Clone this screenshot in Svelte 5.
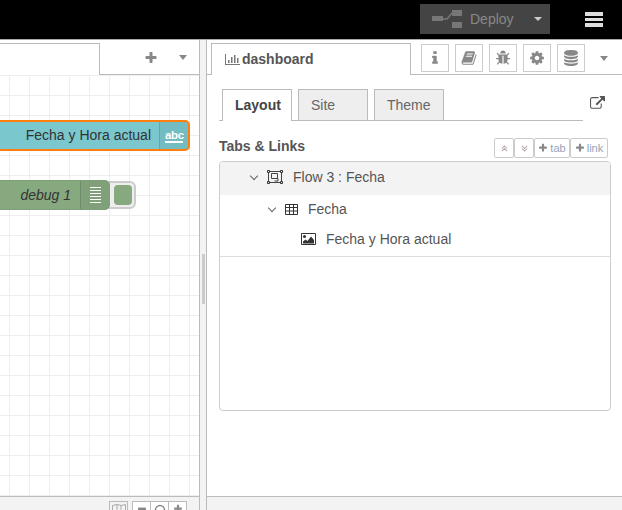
<script>
  const toolIcons = [
    { id: 'info', vb: '0 0 1792 1792', d: 'M1216 1344v128q0 26-19 45t-45 19h-512q-26 0-45-19t-19-45v-128q0-26 19-45t45-19h64v-384h-64q-26 0-45-19t-19-45v-128q0-26 19-45t45-19h384q26 0 45 19t19 45v576h64q26 0 45 19t19 45zm-128-1152v192q0 26-19 45t-45 19h-256q-26 0-45-19t-19-45v-192q0-26 19-45t45-19h256q26 0 45 19t19 45z' },
    { id: 'book', vb: '0 0 1792 1792', d: 'M1703 478q40 57 18 129l-275 906q-19 64-76.500 107.500t-122.500 43.500h-923q-77 0-148.500-53.500t-99.500-131.500q-24-67-2-127 0-4 3-27t4-37q1-8-3-21.500t-3-19.500q2-11 8-21t16.500-23.500 16.500-23.500q23-38 45-91.500t30-91.500q3-10 .5-30t-.5-28q3-11 17-28t17-23q21-36 42-92t25-90q1-9-2.500-32t.5-28q4-13 22-30.500t22-22.500q19-26 42.500-84.500t27.500-96.500q1-8-3-25.500t-2-26.500q2-8 9-18t18-23 17-21q8-12 16.500-30.500t15-35 16-36 19.500-32 26.500-23.500 36-11.500 47.500 5.500l-1 3q38-9 51-9h761q74 0 114 56t18 130l-274 906q-36 119-71.500 153.500t-128.500 34.500h-869q-27 0-38 15-11 16-1 43 24 70 144 70h923q29 0 56-15.500t35-41.500l300-987q7-22 5-57 38 15 59 43zm-1064 2q-4 13 2 22.500t20 9.500h608q13 0 25.500-9.500t16.500-22.500l21-64q4-13-2-22.500t-20-9.500h-608q-13 0-25.500 9.500t-16.500 22.500zm-83 256q-4 13 2 22.500t20 9.500h608q13 0 25.500-9.500t16.500-22.500l21-64q4-13-2-22.500t-20-9.500h-608q-13 0-25.500 9.500t-16.500 22.500z' },
    { id: 'bug', vb: '0 0 1792 1792', d: 'M1696 960q0 26-19 45t-45 19h-224q0 171-67 290l208 209q19 19 19 45t-19 45q-18 19-45 19t-45-19l-198-197q-5 5-15 13t-42 28.500-65 36.500-82 29-97 13v-896h-128v896q-51 0-101.500-13.500t-87-33-66-39-43.500-32.500l-15-14-183 207q-20 21-48 21-24 0-43-16-19-18-20.500-44.500t15.500-46.500l202-227q-58-114-58-274h-224q-26 0-45-19t-19-45 19-45 45-19h224v-294l-173-173q-19-19-19-45t19-45 45-19 45 19l173 173h844l173-173q19-19 45-19t45 19 19 45-19 45l-173 173v294h224q26 0 45 19t19 45zm-480-576h-640q0-133 93.500-226.500t226.500-93.500 226.500 93.500 93.500 226.500z' },
    { id: 'cog', vb: '0 0 1792 1792', d: 'M1152 896q0-106-75-181t-181-75-181 75-75 181 75 181 181 75 181-75 75-181zm512-109v222q0 12-8 23t-20 13l-185 28q-19 54-39 91 35 50 107 138 10 12 10 25t-9 23q-27 37-99 108t-94 71q-12 0-26-9l-138-108q-44 23-91 38-16 136-29 186-7 28-36 28h-222q-14 0-24.500-8.500t-11.500-21.500l-28-184q-49-16-90-37l-141 107q-10 9-25 9-14 0-25-11-126-114-165-168-7-10-7-23 0-12 8-23 15-21 51-66.500t54-70.500q-27-50-41-99l-183-27q-13-2-21-12.500t-8-23.500v-222q0-12 8-23t19-13l186-28q14-46 39-92-40-57-107-138-10-12-10-24 0-10 9-23 26-36 98.500-107.500t94.500-71.500q13 0 26 10l138 107q44-23 91-38 16-136 29-186 7-28 36-28h222q14 0 24.500 8.500t11.500 21.500l28 184q49 16 90 37l142-107q9-9 24-9 13 0 25 10 129 119 165 170 7 8 7 22 0 12-8 23-15 21-51 66.500t-54 70.500q26 50 41 98l183 28q13 2 21 12.500t8 23.500z' },
    { id: 'db', vb: '0 0 1792 1792', d: 'M896 768q237 0 443-43t325-127v170q0 69-103 128t-280 93.500-385 34.500-385-34.500-280-93.500-103-128v-170q119 84 325 127t443 43zm0 768q237 0 443-43t325-127v170q0 69-103 128t-280 93.500-385 34.500-385-34.500-280-93.500-103-128v-170q119 84 325 127t443 43zm0-384q237 0 443-43t325-127v170q0 69-103 128t-280 93.500-385 34.500-385-34.500-280-93.500-103-128v-170q119 84 325 127t443 43zm0-1152q208 0 385 34.500t280 93.500 103 128v128q0 69-103 128t-280 93.500-385 34.500-385-34.500-280-93.500-103-128v-128q0-69 103-128t280-93.500 385-34.500z' }
  ];
  const plus = 'M1600 736v192q0 40-28 68t-68 28h-416v416q0 40-28 68t-68 28h-192q-40 0-68-28t-28-68v-416h-416q-40 0-68-28t-28-68v-192q0-40 28-68t68-28h416v-416q0-40 28-68t68-28h192q40 0 68 28t28 68v416h416q40 0 68 28t28 68z';
  const ext = 'M1408 928v320q0 119-84.500 203.500t-203.500 84.500h-832q-119 0-203.500-84.500t-84.500-203.500v-832q0-119 84.500-203.500t203.500-84.500h704q14 0 23 9t9 23v64q0 14-9 23t-23 9h-704q-66 0-113 47t-47 113v832q0 66 47 113t113 47h832q66 0 113-47t47-113v-320q0-14 9-23t23-9h64q14 0 23 9t9 23zm384-864v512q0 26-19 45t-45 19-45-19l-176-176-652 652q-10 10-23 10t-23-10l-114-114q-10-10-10-23t10-23l652-652-176-176q-19-19-19-45t19-45 45-19h512q26 0 45 19t19 45z';
</script>

<div class="app">
  <header class="top">
    <div class="deploy">
      <svg class="deploy-icon" width="30" height="18" viewBox="0 0 30 18" aria-hidden="true">
        <path d="M0 6h11v5H0zM20 0h10v6H20zM20 12h10v6H20z" fill="#777" />
        <path d="M11 9l4 0 5-6" fill="none" stroke="#777" stroke-width="1.500" />
      </svg>
      <span class="deploy-label">Deploy</span>
      <span class="deploy-caret"></span>
    </div>
    <div class="bars"><i></i><i></i><i></i></div>
  </header>

  <main class="main">
    <section class="workspace">
      <div class="ws-tabs">
        <div class="ws-tab"></div>
        <div class="ws-tools">
          <svg class="ws-plus" width="14" height="14" viewBox="0 0 1792 1792" aria-hidden="true"><path d={plus} fill="#888" /></svg>
          <span class="caret ws-caret"></span>
        </div>
      </div>
      <div class="canvas">
        <div class="node node-time">
          <span class="node-label">Fecha y Hora actual</span>
          <span class="node-icon abc"><span class="abc-text">abc</span></span>
        </div>
        <div class="node-btn"><i></i></div>
        <div class="node node-debug">
          <span class="node-label em">debug 1</span>
          <span class="node-icon lines"><i></i><i></i><i></i><i></i><i></i><i></i></span>
        </div>
      </div>
      <div class="ws-foot">
        <span class="fb fb-map">
          <svg width="14" height="11" viewBox="0 0 14 11" aria-hidden="true"><path d="M.5 1.500L5 .5l4 1 4.500-1v9L9 10.500l-4-1-4.500 1zM5 .5v9M9 1.500v9" fill="none" stroke="#aaa" /></svg>
        </span>
        <div class="fgroup">
          <span class="fb"><svg width="10" height="10" viewBox="0 0 1792 1792" aria-hidden="true"><path d="M192 640h1408v512H192z" fill="#888" /></svg></span>
          <span class="fb"><svg width="12" height="10" viewBox="0 0 12 10" aria-hidden="true"><circle cx="6" cy="6" r="4.500" fill="none" stroke="#888" stroke-width="1.500" /></svg></span>
          <span class="fb"><svg width="10" height="10" viewBox="0 0 1792 1792" aria-hidden="true"><path d={plus} fill="#888" /></svg></span>
        </div>
      </div>
    </section>

    <div class="sep"><div class="handle"></div></div>

    <section class="sidebar">
      <div class="sb-tabs">
        <div class="sb-tab">
          <svg width="15" height="11" viewBox="0 0 15 11" aria-hidden="true"><path d="M0 0h1v10h14v1H0zM3 6h1.500v3H3zM6 3h1.500v6H6zM9 1h1.500v8H9zM12 4h1.500v5H12z" fill="#777" /></svg>
          <span>dashboard</span>
        </div>
        <div class="sb-tools">
          {#each toolIcons as t}
            <span class="tool">
              <svg width="16" height="16" viewBox={t.vb} aria-hidden="true"><path d={t.d} fill="#888" /></svg>
            </span>
          {/each}
        </div>
        <span class="caret sb-caret"></span>
      </div>

      <div class="panel">
        <div class="inner-tabs">
          <div class="itab active">Layout</div>
          <div class="itab">Site</div>
          <div class="itab">Theme</div>
          <svg class="ext" width="15" height="15" viewBox="0 0 1792 1792" aria-hidden="true"><path d={ext} fill="#555" /></svg>
        </div>

        <div class="heading">
          <span class="title">Tabs &amp; Links</span>
          <div class="mini-group">
            <span class="mini arrow">
              <svg width="7" height="7" viewBox="0 0 8 8" aria-hidden="true"><path d="M1 4l3-3 3 3M1 7l3-3 3 3" fill="none" stroke="#b9a6a6" stroke-width="1.200" /></svg>
            </span>
            <span class="mini arrow">
              <svg width="7" height="7" viewBox="0 0 8 8" aria-hidden="true"><path d="M1 1l3 3 3-3M1 4l3 3 3-3" fill="none" stroke="#b9a6a6" stroke-width="1.200" /></svg>
            </span>
            <span class="mini tab">
              <svg width="10" height="10" viewBox="0 0 1792 1792" aria-hidden="true"><path d={plus} fill="#888" /></svg>tab
            </span>
            <span class="mini link">
              <svg width="10" height="10" viewBox="0 0 1792 1792" aria-hidden="true"><path d={plus} fill="#888" /></svg>link
            </span>
          </div>
        </div>

        <div class="tree">
          <div class="row row-flow">
            <span class="chev"></span>
            <svg width="16" height="14" viewBox="0 0 16 14" aria-hidden="true">
              <path d="M1.500 1.500h13v11h-13z" fill="none" stroke="#444" />
              <path d="M4.500 3.500h6v5h-6zM7.500 8.500h3.500v2.500h-3.500" fill="none" stroke="#444" />
              <path d="M.5.500h2v2h-2zM13.500.500h2v2h-2zM.5 11.500h2v2h-2zM13.500 11.500h2v2h-2z" fill="#f3f3f3" stroke="#333" />
            </svg>
            <span class="row-text flow-text">Flow 3 : Fecha</span>
          </div>
          <div class="row row-group">
            <span class="chev"></span>
            <svg width="13" height="11" viewBox="0 0 13 11" aria-hidden="true">
              <path d="M.5.500h12v10H.500zM.500 3.500h12M.500 7h12M4.500 .5v10M8.500 .5v10" fill="none" stroke="#333" />
            </svg>
            <span class="row-text group-text">Fecha</span>
          </div>
          <div class="row row-widget">
            <svg width="15" height="12" viewBox="0 0 15 12" aria-hidden="true">
              <path d="M.5.500h14v11H.500z" fill="none" stroke="#333" />
              <circle cx="3.500" cy="3.500" r="1.500" fill="#333" />
              <path d="M2 10.500V8.500l2.500-2 2 1.500L10 3.500l3 3.500v3.500z" fill="#333" />
            </svg>
            <span class="row-text widget-text">Fecha y Hora actual</span>
          </div>
        </div>
      </div>
      <div class="sb-foot"></div>
    </section>
  </main>
</div>

<style>
  :global(body) {
    margin: 0;
    background: #fff;
  }
  .app {
    width: 622px;
    height: 510px;
    display: flex;
    flex-direction: column;
    overflow: hidden;
    font-family: "Liberation Sans", Arial, sans-serif;
    color: #555;
  }
  .top {
    height: 39px;
    flex: none;
    background: #000;
    border-bottom: 1px solid #aaa;
    display: flex;
    align-items: flex-start;
    justify-content: flex-end;
    box-sizing: content-box;
  }
  .deploy {
    width: 130px;
    height: 30px;
    margin-top: 4px;
    background: #444;
    display: flex;
    align-items: center;
    color: #888;
    font-size: 14px;
  }
  .deploy-icon {
    margin-left: 12px;
  }
  .deploy-label {
    margin-left: 9px;
    margin-right: -1px;
    position: relative;
    left: -1px;
  }
  .deploy-caret {
    margin-left: 20px;
    border-left: 4.500px solid transparent;
    border-right: 4.500px solid transparent;
    border-top: 4.500px solid #ccc;
  }
  .bars {
    width: 18px;
    margin: 12px 19px 0 35px;
    display: flex;
    flex-direction: column;
    gap: 2px;
  }
  .bars i {
    display: block;
    height: 3.500px;
    background: #ddd;
  }
  .main {
    flex: 1;
    min-height: 0;
    display: flex;
  }
  .workspace {
    width: 199px;
    flex: none;
    display: flex;
    flex-direction: column;
  }
  .ws-tabs {
    height: 35px;
    flex: none;
    display: flex;
    box-sizing: border-box;
    padding-top: 3px;
    border-bottom: 1px solid #bbb;
    background: #fff;
  }
  .ws-tab {
    width: 100px;
    height: 32px;
    box-sizing: border-box;
    border: 1px solid #bbb;
    border-left: 0;
    border-bottom: 0;
    background: #fff;
    margin-bottom: -1px;
    position: relative;
    z-index: 1;
    flex: none;
  }
  .ws-tools {
    flex: 1;
    display: flex;
    align-items: center;
    padding-bottom: 2px;
  }
  .ws-plus {
    margin-left: 44px;
  }
  .caret {
    display: block;
    width: 0;
    height: 0;
    border-left: 4.500px solid transparent;
    border-right: 4.500px solid transparent;
    border-top: 5px solid #888;
  }
  .ws-caret {
    margin-left: 21px;
  }
  .canvas {
    flex: 1;
    min-height: 0;
    position: relative;
    overflow: hidden;
    background-color: #fff;
    background-image: linear-gradient(to right, #eee 1px, transparent 1px),
      linear-gradient(to bottom, #eee 1px, transparent 1px);
    background-size: 20px 20px;
    background-position: 9px 0;
  }
  .node {
    position: absolute;
    display: flex;
    height: 30px;
    box-sizing: border-box;
    border-radius: 5px;
    color: #333;
    font-size: 14px;
  }
  .node-time {
    left: -12px;
    top: 45px;
    width: 202px;
    background: #7ac7cd;
    border: 2px solid #ff7f0e;
    height: 31px;
  }
  .node-debug {
    left: -12px;
    top: 105px;
    width: 122px;
    background: #87a980;
    border: 1px solid #7f9f78;
  }
  .node-label {
    flex: 1;
    text-align: right;
    padding-right: 8px;
    line-height: 27px;
  }
  .em {
    font-style: italic;
    line-height: 28px;
    padding-right: 9px;
  }
  .node-icon {
    width: 29px;
    flex: none;
    box-sizing: border-box;
    background: rgba(0, 0, 0, 0.05);
    border-left: 1px solid rgba(0, 0, 0, 0.12);
  }
  .abc {
    display: flex;
    justify-content: center;
    align-items: flex-start;
    padding-top: 8px;
    border-top-right-radius: 3px;
    border-bottom-right-radius: 3px;
  }
  .abc-text {
    width: 18px;
    box-sizing: border-box;
    color: #fff;
    font-size: 11.500px;
    font-weight: bold;
    letter-spacing: -0.300px;
    text-align: center;
    line-height: 10px;
    padding-bottom: 1px;
    border-bottom: 2px solid #fff;
  }
  .lines {
    display: flex;
    flex-direction: column;
    align-items: center;
    justify-content: center;
    gap: 2px;
    border-top-right-radius: 4px;
    border-bottom-right-radius: 4px;
  }
  .lines i {
    display: block;
    width: 11px;
    height: 1px;
    background: #fff;
  }
  .node-btn {
    position: absolute;
    left: 100px;
    top: 106px;
    width: 36px;
    height: 28px;
    box-sizing: border-box;
    background: #eee;
    border: 2px solid #ccc;
    border-radius: 6px;
    display: flex;
    align-items: center;
    justify-content: flex-end;
    padding-right: 2px;
  }
  .node-btn i {
    display: block;
    width: 18px;
    height: 20px;
    background: #87a980;
    border-radius: 4px;
  }
  .ws-foot {
    height: 14px;
    flex: none;
    box-sizing: border-box;
    background: #f3f3f3;
    border-top: 1px solid #bbb;
    display: flex;
    align-items: flex-start;
    padding: 4px 0 0 109px;
    gap: 5px;
    overflow: hidden;
  }
  .fgroup {
    display: flex;
  }
  .fb {
    width: 19px;
    height: 20px;
    flex: none;
    box-sizing: border-box;
    border: 1px solid #bbb;
    background: #fff;
    display: flex;
    justify-content: center;
    padding-top: 2px;
    margin-left: -1px;
  }
  .fb-map {
    margin-left: 0;
    background: #f3f3f3;
  }
  .sep {
    width: 8px;
    flex: none;
    box-sizing: border-box;
    background: #f3f3f3;
    border-left: 1px solid #bbb;
    border-right: 1px solid #bbb;
    display: flex;
    justify-content: center;
    align-items: flex-start;
    padding-top: 214px;
  }
  .handle {
    width: 3px;
    height: 50px;
    background: #ccc;
  }
  .sidebar {
    flex: 1;
    min-width: 0;
    display: flex;
    flex-direction: column;
  }
  .sb-tabs {
    height: 35px;
    flex: none;
    box-sizing: border-box;
    border-bottom: 1px solid #bbb;
    display: flex;
    padding: 3px 0 0 4px;
    position: relative;
  }
  .sb-tab {
    width: 200px;
    height: 32px;
    box-sizing: border-box;
    border: 1px solid #bbb;
    border-bottom: 0;
    background: #fff;
    display: flex;
    align-items: center;
    gap: 2px;
    padding: 0 0 1px 13px;
    font-size: 14px;
    font-weight: bold;
    color: #555;
  }
  .sb-tools {
    display: flex;
    gap: 6px;
    margin: 1px 0 0 10px;
  }
  .tool {
    width: 28px;
    height: 28px;
    box-sizing: border-box;
    border: 1px solid #ccc;
    display: flex;
    align-items: center;
    justify-content: center;
    background: #fff;
  }
  .sb-caret {
    margin: 13px 0 0 15px;
  }
  .panel {
    flex: 1;
    min-height: 0;
    display: flex;
    flex-direction: column;
    padding: 14px 11px 0 12px;
  }
  .inner-tabs {
    display: flex;
    gap: 6px;
    height: 32px;
    flex: none;
    box-sizing: border-box;
    border-bottom: 1px solid #bbb;
    padding-left: 3px;
    margin-right: 28px;
    position: relative;
  }
  .itab {
    width: 70px;
    height: 31px;
    box-sizing: border-box;
    border: 1px solid #bbb;
    border-bottom: 0;
    background: #eee;
    font-size: 14px;
    line-height: 31px;
    padding-left: 12px;
    color: #666;
  }
  .itab.active {
    background: #fff;
    font-weight: bold;
    color: #444;
    height: 32px;
    position: relative;
    z-index: 1;
  }
  .ext {
    position: absolute;
    right: -22px;
    top: 7px;
  }
  .heading {
    display: flex;
    justify-content: space-between;
    align-items: flex-start;
    height: 40px;
    flex: none;
    padding-top: 17px;
    box-sizing: border-box;
  }
  .title {
    font-size: 14px;
    font-weight: bold;
    color: #555;
    line-height: 16px;
  }
  .mini-group {
    display: flex;
    margin-right: 3px;
  }
  .mini {
    height: 20px;
    box-sizing: border-box;
    border: 1px solid #ccc;
    border-radius: 2px;
    background: #fff;
    display: flex;
    align-items: center;
    justify-content: center;
    font-size: 11px;
    color: #93a5ba;
    gap: 2px;
  }
  .arrow {
    width: 20px;
  }
  .tab {
    width: 36px;
  }
  .link {
    width: 38px;
  }
  .tree {
    height: 250px;
    flex: none;
    box-sizing: border-box;
    border: 1px solid #ccc;
    border-radius: 4px;
    overflow: hidden;
    font-size: 14px;
    color: #555;
  }
  .row {
    display: flex;
    align-items: center;
    box-sizing: border-box;
  }
  .row-flow {
    height: 33px;
    background: #f3f3f3;
    padding: 0 0 3px 31px;
  }
  .row-group {
    height: 30px;
    padding: 0 0 2px 49px;
  }
  .row-widget {
    height: 32px;
    padding: 0 0 3px 81px;
    border-bottom: 1px solid #ddd;
  }
  .chev {
    width: 6px;
    height: 6px;
    box-sizing: border-box;
    border-right: 1px solid #666;
    border-bottom: 1px solid #666;
    transform: rotate(45deg);
    margin: -2px 0 0 0;
    flex: none;
  }
  .row-flow svg {
    margin-left: 10px;
  }
  .row-group svg {
    margin-left: 10px;
  }
  .flow-text {
    margin-left: 10px;
  }
  .group-text {
    margin-left: 10px;
  }
  .widget-text {
    margin-left: 10px;
  }
  .sb-foot {
    height: 14px;
    flex: none;
    margin-top: auto;
    box-sizing: border-box;
    background: #f3f3f3;
    border-top: 1px solid #bbb;
  }
</style>
